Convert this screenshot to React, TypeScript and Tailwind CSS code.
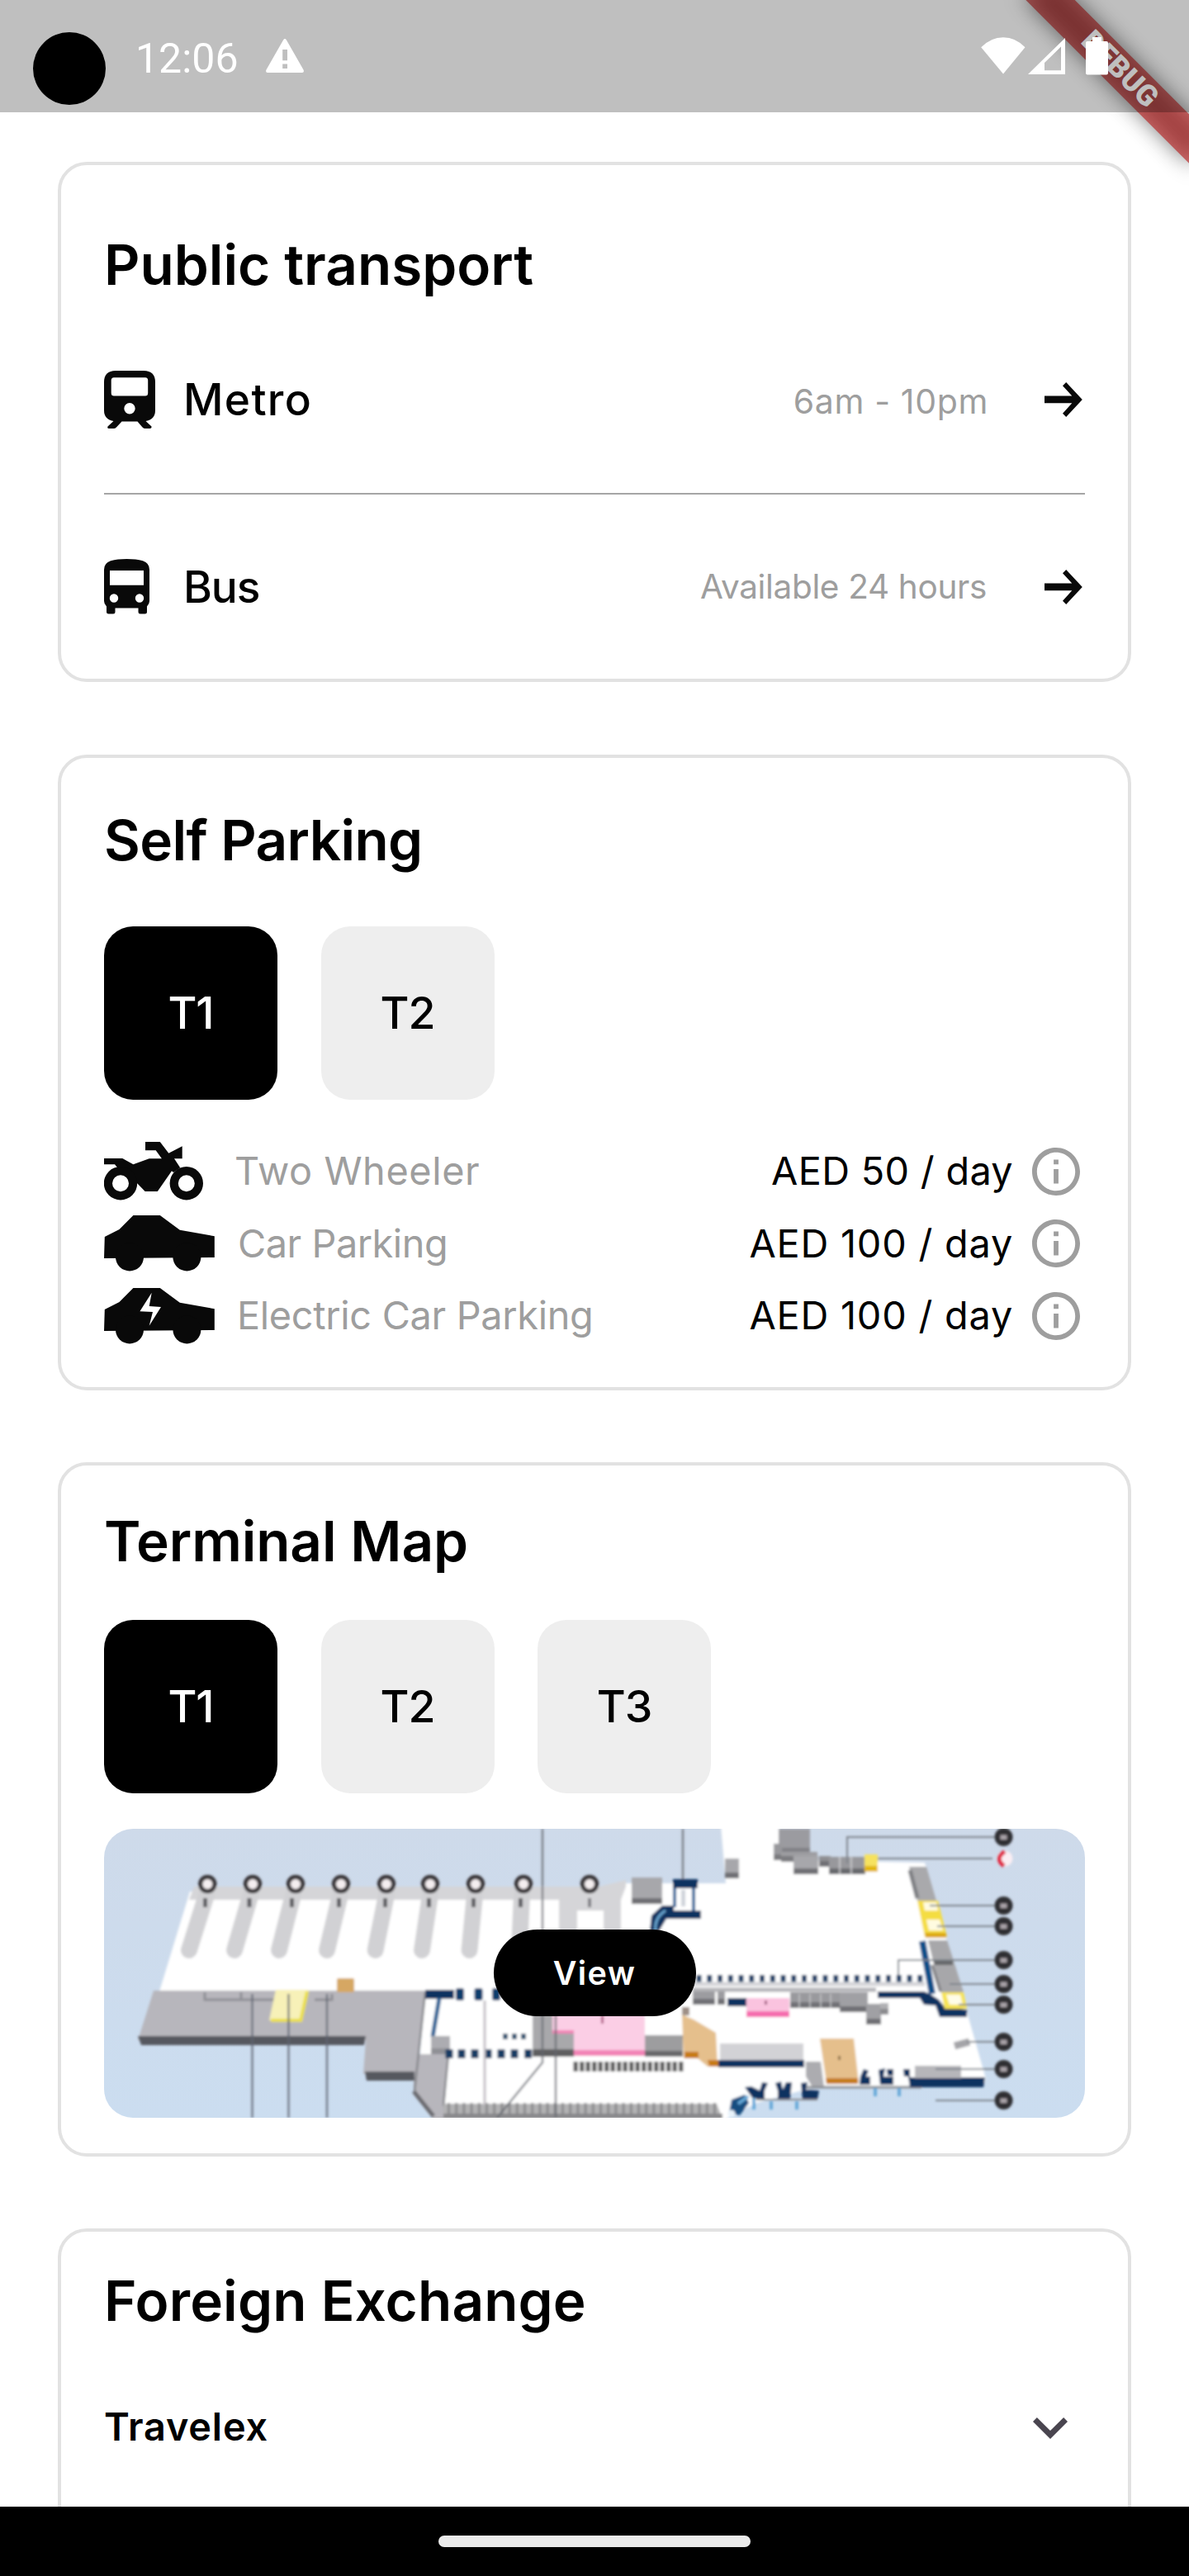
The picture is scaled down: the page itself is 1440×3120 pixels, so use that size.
import type { ReactNode } from "react";

/* ---------- status bar ---------- */

function DebugBanner() {
  return (
    <div className="absolute top-0 right-0 h-[280px] w-[280px] overflow-hidden">
      <div className="absolute top-[63px] left-[56px] h-[42px] w-[280px] rotate-45">
        <div className="absolute inset-0 bg-black/50 blur-[12.6px]" />
        <div className="absolute inset-0 flex items-center justify-center bg-[#b71c1c]/[0.627] font-['Roboto'] text-[35.7px] leading-none font-black text-white">
          DEBUG
        </div>
      </div>
    </div>
  );
}

function StatusBar() {
  return (
    <header className="relative z-10 flex h-[136px] shrink-0 bg-black/25">
      <div className="mt-[39px] ml-10 h-[88px] w-[88px] rounded-full bg-black" />
      <div className="mt-[41px] ml-[36px] h-[60px] w-[126px] font-['Roboto'] text-[50px] leading-[60px] text-white">
        12:06
      </div>
      <svg className="mt-[47px] ml-[31px] h-[41px] w-[48px]" viewBox="0 0 48 41">
        <path
          fillRule="evenodd"
          fill="#fff"
          d="M22.2 1.2Q24 -1.2 25.800 1.200L46.500 37.500Q47.800 41 45 41H3Q.2 41 1.500 37.500ZM21.200 13V26.300H27V13ZM21.200 30.500V36H27V30.500Z"
        />
      </svg>
      <div className="ml-auto flex">
        <svg className="mt-[45px] h-[45px] w-[54px]" viewBox="0 0 54 45">
          <path fill="#fff" d="M27 44.500L.2 12.300Q12 .2 27 .2T53.500 12.300Z" />
        </svg>
        <svg className="mt-[46px] ml-[3px] h-[44px] w-[46px]" viewBox="0 0 46 44">
          <path fill="#fff" fillRule="evenodd" d="M0 44L45 0V44ZM20 30V39.200H40V10.500Z" />
        </svg>
        <svg className="mt-[45px] mr-[98px] ml-[24px] h-[46px] w-[27px]" viewBox="0 0 27 46">
          <path fill="#fff" d="M8 0H19V5H25Q27 5 27 7V43.500Q27 45.500 25 45.500H2Q0 45.500 0 43.500V7Q0 5 2 5H8Z" />
        </svg>
      </div>
    </header>
  );
}

/* ---------- icons ---------- */

function MetroIcon() {
  return (
    <svg className="h-[70px] w-[62px]" viewBox="0 0 62 70" fill="#090909">
      <path
        fillRule="evenodd"
        d="M14 0H48Q62 0 62 14V48Q62 59 50.500 61L57.500 67.500Q58 70 55.500 70H50Q48 70 46.500 68.500L40.500 61.500H21.500L15 68.500Q13.500 70 11.500 70H6Q3.500 70 4.500 67.500L11.500 61Q0 59 0 48V14Q0 0 14 0ZM12 8.300Q8.700 8.300 8.700 11.800V27Q8.700 30.600 12 30.600H50Q53.200 30.600 53.200 27V11.800Q53.200 8.300 50 8.300ZM31 39A6.700 6.700 0 1 0 31 52.400A6.700 6.700 0 1 0 31 39Z"
      />
    </svg>
  );
}

function BusIcon() {
  return (
    <svg className="h-[67px] w-[56px]" viewBox="0 0 56 67" fill="#090909">
      <path
        fillRule="evenodd"
        d="M0 13Q0 5 8 2.300Q16 0 27.500 0T47 2.300Q55 5 55 13V51Q55 54.500 52 57.500V64Q52 66.500 49.500 66.500H44Q41.500 66.500 41.500 64V59.500H13.500V64Q13.500 66.500 11 66.500H5.500Q3 66.500 3 64V57.500Q0 54.500 0 51ZM7 14V31.800H48V14ZM12 42.300A5.200 5.200 0 1 0 12 52.700A5.200 5.200 0 1 0 12 42.300ZM43 42.300A5.200 5.200 0 1 0 43 52.700A5.200 5.200 0 1 0 43 42.300Z"
      />
    </svg>
  );
}

function ArrowIcon() {
  return (
    <svg className="mr-[3px] h-[42px] w-[46px]" viewBox="0 0 46 42" fill="#090909">
      <path d="M0 16.600H33.300L22 4.200L26.200 0L45.800 21L26.200 42L22 37.800L33.300 25.200H0Z" />
    </svg>
  );
}

function InfoIcon() {
  return (
    <svg className="mr-[6px] ml-[23px] h-[58px] w-[58px]" viewBox="2 2 20 20" fill="#9e9e9e">
      <path d="M11 7h2v2h-2zm0 4h2v6h-2zm1-9C6.480 2 2 6.480 2 12s4.480 10 10 10 10-4.480 10-10S17.520 2 12 2zm0 18c-4.410 0-8-3.590-8-8s3.590-8 8-8 8 3.590 8 8-3.590 8-8 8z" />
    </svg>
  );
}

function MotorcycleIcon() {
  return (
    <svg className="h-[71px] w-[120px]" viewBox="0 0 120 71" fill="#090909">
      <path d="M0 20H22.300L35.400 27.300L54.700 20.300H69.900L62.700 10.300H50V0H67.800L78.300 13.700L94.700 5.300V20.300H85L92.200 31.300L84 37L82 35.300L64.800 60H49.700L38 48L16 31L13 27.300H0Z" />
      <path
        fillRule="evenodd"
        d="M20 30A20.200 20.200 0 1 0 20 70.400A20.200 20.200 0 1 0 20 30ZM20 40.200A10 10 0 1 1 20 60.200A10 10 0 1 1 20 40.200ZM99.800 30A20.200 20.200 0 1 0 99.800 70.400A20.200 20.200 0 1 0 99.800 30ZM99.800 40.200A10 10 0 1 1 99.800 60.200A10 10 0 1 1 99.800 40.200Z"
      />
    </svg>
  );
}

function CarIcon({ electric = false }: { electric?: boolean }) {
  return (
    <svg className="h-[68px] w-[134px]" viewBox="0 0 134 68" fill="#090909">
      <path d="M35.400 0H67.800L91.800 17.700L133.800 25.300V51L0 52L.8 26L18.500 17Z" />
      <circle cx="31" cy="50.400" r="17" />
      <circle cx="100.400" cy="50.400" r="17" />
      {electric && <path fill="#fff" d="M57.700 5.700L54.700 21.900L69 23L54.700 45.700L59 29L43.400 28.300Z" />}
    </svg>
  );
}

function ChevronIcon() {
  return (
    <svg className="mt-[4px] mr-[21px] h-[26px] w-[42px]" viewBox="0 0 42 26" fill="#49454f">
      <path d="M4.900 0L21 16L37.100 0L42 4.900L21 26L0 4.900Z" />
    </svg>
  );
}

/* ---------- shared pieces ---------- */

function Card({ className, children }: { className: string; children: ReactNode }) {
  return (
    <section className={`shrink-0 rounded-[35px] border-4 border-[#e2e2e2] px-[52px] ${className}`}>
      {children}
    </section>
  );
}

function Title({ className = "", children }: { className?: string; children: ReactNode }) {
  return (
    <h2 className={`h-[70px] text-[67.4px] leading-[70px] font-semibold whitespace-nowrap ${className}`}>
      {children}
    </h2>
  );
}

function TerminalTab({ label, active = false }: { label: string; active?: boolean }) {
  return (
    <button
      className={`flex h-[210px] w-[210px] items-center justify-center rounded-[35px] text-[53.6px] leading-none font-[450] tracking-[-1px] ${
        active ? "bg-black text-white" : "bg-[#eeeeee] text-black"
      }`}
    >
      {label}
    </button>
  );
}

function ParkingRow({
  icon,
  label,
  labelClass,
  price,
  priceClass,
}: {
  icon: ReactNode;
  label: string;
  labelClass: string;
  price: string;
  priceClass: string;
}) {
  return (
    <div className="flex h-[87.5px] items-center text-[46.8px] leading-none whitespace-nowrap">
      {icon}
      <span className={`text-[#9e9e9e] ${labelClass}`}>{label}</span>
      <span className={`ml-auto ${priceClass}`}>{price}</span>
      <InfoIcon />
    </div>
  );
}

/* ---------- terminal map ---------- */

const stands = [
  [125.3, 124, 103], [180, 177.5, 158], [232, 229, 212], [287, 286, 270],
  [342, 342, 328.600], [395, 395, 385], [450, 449, 442.500], [508, 506, 503],
];
const beacons = [10, 93, 118, 159, 188, 213, 258, 291, 329];
const leaders = [
  "M1089 10H900V42", "M1076 36H937", "M1089 93H1000", "M1089 118H1009", "M1089 159H962V177",
  "M1089 188H1024", "M1089 213H1035", "M1089 258H1045", "M1089 291H1007", "M1089 329H1007",
];
const benches = Array.from({ length: 22 }, (_, i) => 720.500 + i * 12.750);
const combs = Array.from({ length: 36 }, (_, i) => 416 + i * 9.200);
const seats = Array.from({ length: 18 }, (_, i) => 571 + i * 7.500);

function Block({ x, y, w, h, top = "#a7a7ab", side = "#6f7074" }: { x: number; y: number; w: number; h: number; top?: string; side?: string }) {
  return (
    <g>
      <rect x={x} y={y} width={w} height={h} fill={top} />
      <rect x={x} y={y + h - 7} width={w} height={7} fill={side} />
    </g>
  );
}

function TerminalMap() {
  return (
    <svg className="block h-[350px] w-[1188px]" viewBox="0 0 1188 350">
      <defs>
        <linearGradient id="sky" x1="0" y1="0" x2="0" y2="1">
          <stop offset="0" stopColor="#cedaea" />
          <stop offset="1" stopColor="#cbddf0" />
        </linearGradient>
        <filter id="soft" x="0" y="0" width="1" height="1">
          <feGaussianBlur stdDeviation="1.600" />
        </filter>
      </defs>
      <rect width="1188" height="350" fill="url(#sky)" />
      <g filter="url(#soft)">
        <rect width="1188" height="350" fill="none" />
        {/* apron */}
        <path fill="#fff" d="M104 76H600L632 66H753L747 -4H817L822 38L994 41L1068 303L1064 313H860L790 332L749 354H413L383 273L389 197H67Z" />
        <path fill="#d5d5d8" d="M109 70H600L632 62V70L626 86V124H605V99H573V124H551V86H103Z" />
        {stands.map(([cx, x1, x2]) => (
          <g key={cx}>
            <path d={`M${x1} 80L${x2} 147`} stroke="#d1d1d4" strokeWidth="20" strokeLinecap="round" />
            <rect x={x1 - 4} y="84" width="5" height="11" fill="#5d5d62" />
          </g>
        ))}
        {[...stands.map((s) => s[0]), 588].map((cx) => (
          <circle key={cx} cx={cx} cy="67" r="8.600" fill="#f4eef0" stroke="#393639" strokeWidth="5.200" />
        ))}
        <rect x="586" y="84" width="4" height="11" fill="#7d7d82" />

        {/* west building */}
        <path fill="#b7b6bc" d="M60 196H389L380 273H417L411 354H400L375 322V297H314L317 256H41Z" />
        <path fill="#57585e" d="M41 251H317L315 262H45Z" />
        <path fill="#57585e" d="M316 294H376V305H318Z" />
        <path d="M375 318L399 348" stroke="#6a6b70" strokeWidth="5" />
        <path d="M389 198L376 318M417 273L411 336" stroke="#85868b" strokeWidth="2.500" />
        <path fill="#fff" d="M390 207H400L395 270H383Z" />
        <path fill="none" stroke="#8e8e94" strokeWidth="3" d="M122 198V207H207M166 198V206M255 207H276V200" />
        <path fill="#f7f1b8" d="M208 195H248L240 232H200Z" />
        <path d="M246 197L238 233M202 232H240" stroke="#eadf45" strokeWidth="4" />
        <rect x="282" y="181" width="21" height="17" rx="2" fill="#d6a763" />
        <path d="M179.500 200V350M223.500 200V350M270 200V350" stroke="#5f6472" strokeWidth="2.500" opacity=".8" />

        {/* central hall */}
        <path fill="#0b3361" d="M389 195H424V206H389Z" />
        <path d="M406 205L398 252" stroke="#2c6496" strokeWidth="5" />
        {[431, 453.500, 475, 497].map((x) => (
          <rect key={x} x={x - 5} y="193" width="10" height="15" rx="3" fill="#0f3c6d" />
        ))}
        <Block x={396} y={251} w={23} h={22} top="#acacb1" side="#8f9095" />
        {[486, 497, 508].map((x) => (
          <rect key={x} x={x - 3} y="248" width="6" height="7" fill="#2f5573" />
        ))}
        {[418, 433, 449, 465, 481, 497, 513.600].map((x) => (
          <rect key={x} x={x - 4.500} y="267" width="9" height="11" rx="1" fill="#143a63" />
        ))}
        <path fill="#a8a8ab" d="M519 222H546V248H569V276H519Z" />
        <path fill="#5e5f61" d="M519 267H569V276H519Z" />
        <path fill="#fbcee5" d="M543 222H655V270H569V247H543Z" />
        <path fill="#f283b6" d="M569 268H655V275H569ZM543 244H569V248H543Z" />
        <rect x="602" y="226" width="3" height="10" fill="#b05c86" />
        <Block x={655} y={250} w={46} h={26} top="#9d9d9f" side="#67686a" />
        {seats.map((x) => (
          <rect key={x} x={x - 2.500} y="282" width="5.400" height="12" fill="#5c5b5c" />
        ))}
        <path fill="#b2b2b4" d="M411 333H742L750 354H411Z" />
        {combs.map((x) => (
          <rect key={x} x={x} y="332" width="3" height="18" fill="#8b8b8d" />
        ))}
        <rect x="411" y="345" width="338" height="5" fill="#87878a" />
        <path fill="none" stroke="#63676e" strokeWidth="2.400" opacity=".8" d="M531 0V283L476 350M547 225V350M701 0V62" />
        <path d="M461 208V334" stroke="#c3bfc4" strokeWidth="3" />

        {/* north gates */}
        <Block x={639} y={59} w={37} h={32} />
        <Block x={752} y={36} w={17} h={24} />
        <path fill="#0b3361" d="M689 61H719V72H689Z" />
        <path d="M691 72V95M714 72V99" stroke="#27669c" strokeWidth="4" />
        <rect x="699" y="74" width="5" height="20" fill="#cfd4da" />
        <path fill="#0b3361" d="M676 93H690V99H723V109H681L672 124H661L663 105Z" />
        <path d="M680 99Q666 108 668 124" stroke="#6aa7d2" strokeWidth="3" fill="none" />
        <Block x={817} y={0} w={38} h={30} top="#9b9ba0" side="#828287" />
        <Block x={811} y={18} w={10} h={20} top="#98989c" side="#7a7a7e" />
        <Block x={820} y={28} w={44} h={12} top="#9d9da1" side="#7b7b80" />
        <Block x={835} y={33} w={30} h={22} />
        <Block x={866} y={33} w={14} h={13} top="#8f8f93" />
        <Block x={878} y={34} w={44} h={21} top="#98989c" side="#68696d" />
        <path d="M891 34V55M905 34V55" stroke="#d2d2d5" strokeWidth="1.500" />
        <Block x={921} y={31} w={16} h={21} top="#f6e25e" side="#e3b70c" />

        {/* centre spine */}
        <path d="M713 188H994" stroke="#d4d4d8" strokeWidth="5" />
        {benches.map((x) => (
          <rect key={x} x={x - 3} y="177" width="6" height="8.500" rx="1" fill="#123e68" />
        ))}
        <path d="M713 195H935" stroke="#b5b5b9" strokeWidth="5" />
        <Block x={713} y={197} w={27} h={16} top="#9c9ca0" />
        <Block x={743} y={197} w={9} h={16} top="#9c9ca0" />
        <rect x="755" y="205" width="24" height="10" fill="#0b3361" />
        <Block x={778} y={205} w={52} h={23} top="#fac3df" side="#f56cae" />
        <rect x="800" y="208" width="3" height="5" fill="#a05a80" />
        <Block x={831} y={198} w={60} h={19} top="#99999d" />
        <path d="M842 200V217M855 200V217M868 200V217M880 200V217" stroke="#c3c3c6" strokeWidth="1.500" />
        <Block x={891} y={198} w={34} h={24} top="#a0a0a4" />
        <Block x={923} y={212} w={18} h={25} top="#a0a0a4" />
        <Block x={940} y={211} w={10} h={14} top="#b0b0b3" side="#8a8a8e" />
        <path fill="#0b3361" d="M937 197H993L1000 200L1011 207L1018 216L1045 219V228H1012L1007 214L993 213L988 205H937Z" />
        <path d="M991 136L1003 200" stroke="#115089" strokeWidth="8" />

        {/* east wing */}
        <path fill="#a9a9ac" d="M975 46H996L1008 87H985Z" />
        <path d="M976 50L985 84" stroke="#7f8084" strokeWidth="5" />
        <path fill="#f4dd42" d="M985 87H1010L1021 131H994Z" />
        <path fill="#fffbe0" d="M992 89H1008L1010 99H994ZM996 110H1012L1016 123H999Z" />
        <path fill="#dca915" d="M994 126H1020V132H995Z" />
        <path fill="#a7a7aa" d="M998 135H1021L1041 198H1013Z" />
        <path fill="#66676b" d="M1004 158H1028V165H1006Z" />
        <path d="M1003 165L1013 197" stroke="#86868a" strokeWidth="4" />
        <path fill="#f6e352" d="M1014 198H1041L1045 218H1018Z" />
        <path fill="#fffde8" d="M1020 201H1037L1040 213H1024Z" />

        {/* south piers */}
        <path fill="#9e8f86" d="M700 216H709V226H700Z" />
        <path fill="#e5bf8c" d="M700 225L714 231L741 247L743 288H731L719 278H702Z" />
        <path fill="#c77a18" d="M703 270H720V278H703ZM731 280H744V288H733Z" />
        <rect x="746" y="260" width="101" height="22" fill="#d2d2d6" />
        <rect x="744" y="280" width="104" height="9" fill="#0b3361" />
        <path fill="#acacb0" d="M850 282H868L872 313H858L850 300Z" />
        <path fill="#e5bf8c" d="M867 254H908L914 308H875Z" />
        <path fill="#c67b1c" d="M874 302H913V309H875Z" />
        <rect x="889" y="275" width="3" height="5" fill="#8d6f48" />
        <path d="M850 313H990" stroke="#8b8e93" strokeWidth="3" />
        <path fill="#0b3361" d="M916 300L920 291L926 293L923 300H928V310H915ZM938 292L946 290L944 300H956V310H940ZM968 291H976V301H1067L1065 313H976L974 300H969ZM948 291H956V299H949Z" />
        <rect x="982" y="287" width="56" height="15" fill="#b6b6ba" />
        <path fill="#0b3361" d="M776 313L784 312L794 317L797 307L804 308L800 317V327H786ZM813 308L820 306L822 316L826 307H833L831 327H816V317ZM844 308L852 307L850 316L866 317L864 328H846Z" />
        <path d="M790 328H864" stroke="#8b8e93" strokeWidth="2" />
        <path fill="#174d80" d="M760 328L776 322L781 332L770 347L757 344Z" />
        <circle cx="760" cy="345" r="4.500" fill="#e8f3fb" />
        <path d="M768 333L780 324M787 326V340M808 330V340M839 330V340M934 314V324M963 314V324" stroke="#66a9d8" strokeWidth="4" />
        <path d="M1030 263L1048 258" stroke="#a4a4a8" strokeWidth="9" />

        {/* callouts */}
        {leaders.map((d) => (
          <path key={d} d={d} fill="none" stroke="#7d838b" strokeWidth="2" />
        ))}
        {beacons.map((y) => (
          <g key={y}>
            <circle cx="1089.500" cy={y} r="11" fill="#2f2d30" />
            <rect x="1085.500" y={y - 2.500} width="8" height="5.500" fill="#a9a3a8" />
          </g>
        ))}
        <circle cx="1091" cy="36" r="9.500" fill="#fbeef3" />
        <path d="M1091 27.500Q1078 36 1090 45" fill="none" stroke="#e0243f" strokeWidth="5" />
      </g>
    </svg>
  );
}

/* ---------- page ---------- */

export default function App() {
  return (
    <div className="relative flex h-[3120px] w-[1440px] flex-col overflow-hidden bg-white font-['Inter',sans-serif] text-black">
      <DebugBanner />
      <StatusBar />

      <main className="flex min-h-0 flex-1 flex-col overflow-hidden px-[70px] pt-[60px]">
        <Card className="h-[630px] pt-[85.5px]">
          <Title>Public transport</Title>
          <div className="mt-[15.5px] flex h-[228px] items-center border-b-2 border-[#a6a6a6] whitespace-nowrap">
            <div className="w-[96px]"><MetroIcon /></div>
            <span className="text-[53.2px] leading-none font-[450] tracking-[1.3px]">Metro</span>
            <span className="mt-[4px] mr-[68px] ml-auto text-[41px] leading-none tracking-[0.65px] text-[#9e9e9e]">6am - 10pm</span>
            <ArrowIcon />
          </div>
          <div className="flex h-[223px] items-center whitespace-nowrap">
            <div className="w-[96px]"><BusIcon /></div>
            <span className="text-[53.2px] leading-none font-[450] tracking-[-1.1px]">Bus</span>
            <span className="mt-[2px] mr-[70px] ml-auto text-[40.5px] leading-none tracking-[-0.33px] text-[#9e9e9e]">Available 24 hours</span>
            <ArrowIcon />
          </div>
        </Card>

        <Card className="mt-[87.5px] h-[770px] pt-[65px]">
          <Title className="tracking-[-0.64px]">Self Parking</Title>
          <div className="mt-[69px] flex gap-[52.5px]">
            <TerminalTab label="T1" active />
            <TerminalTab label="T2" />
          </div>
          <div className="mt-[43.5px] flex flex-col">
            <ParkingRow icon={<MotorcycleIcon />} label="Two Wheeler" labelClass="ml-[38px] tracking-[0.61px]" price="AED 50 / day" priceClass="tracking-[0.32px]" />
            <ParkingRow icon={<CarIcon />} label="Car Parking" labelClass="ml-[28px] tracking-[-0.45px]" price="AED 100 / day" priceClass="tracking-[0.8px]" />
            <ParkingRow icon={<CarIcon electric />} label="Electric Car Parking" labelClass="ml-[27px] tracking-[-0.3px]" price="AED 100 / day" priceClass="tracking-[0.8px]" />
          </div>
        </Card>

        <Card className="mt-[87.5px] h-[840.5px] pt-[56.5px]">
          <Title className="tracking-[-0.11px]">Terminal Map</Title>
          <div className="mt-[60px] flex gap-[52.5px]">
            <TerminalTab label="T1" active />
            <TerminalTab label="T2" />
            <TerminalTab label="T3" />
          </div>
          <div className="relative mt-[43.5px] h-[350px] overflow-hidden rounded-[35px]">
            <TerminalMap />
            <button className="absolute top-[122px] left-[471.5px] flex h-[105px] w-[245px] items-center justify-center rounded-full bg-black pt-[3px] text-[39.5px] leading-none font-semibold tracking-[1.39px] text-white">
              View
            </button>
          </div>
        </Card>

        <Card className="mt-[87px] h-[480px] pt-[49px]">
          <Title className="tracking-[0.13px]">Foreign Exchange</Title>
          <div className="mt-[77.5px] flex h-20 items-center justify-between">
            <span className="text-[46.8px] leading-none font-semibold tracking-[0.82px]">Travelex</span>
            <ChevronIcon />
          </div>
        </Card>
      </main>

      <nav className="flex h-[84px] shrink-0 justify-center bg-black pt-[35px]">
        <div className="h-[14px] w-[378px] rounded-full bg-[#ebebeb]" />
      </nav>
    </div>
  );
}
